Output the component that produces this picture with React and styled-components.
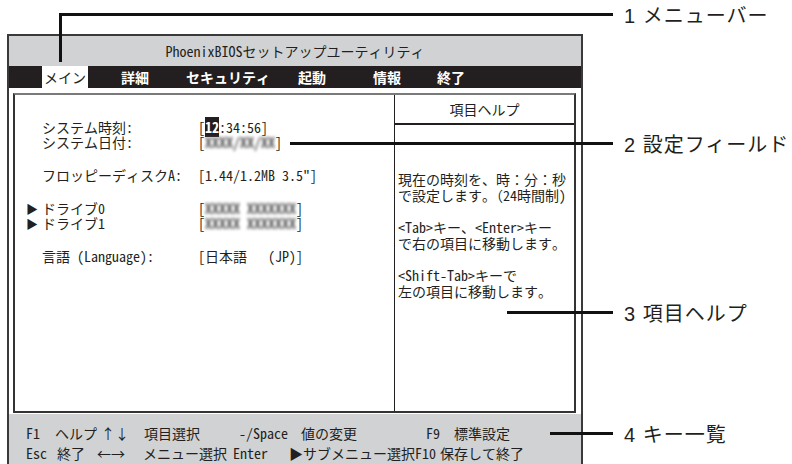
import React from 'react';
import styled, { createGlobalStyle } from 'styled-components';

const GlobalStyle = createGlobalStyle`
  html, body { margin: 0; padding: 0; background: #fff; }
  body { font-family: "Noto Sans CJK JP", sans-serif; }
`;

const BIOS_FONT = `"Noto Sans Mono CJK JP", "Noto Sans CJK JP", sans-serif`;
const INK = '#231f20';

const Page = styled.div`
  position: relative;
  width: 792px;
  height: 464px;
  overflow: hidden;
  background: #fff;
  padding: 34px 0 0 7px;
  box-sizing: border-box;
`;

const Window = styled.div`
  width: 576px;
  height: 470px;
  box-sizing: border-box;
  border: 2px solid #3a3a3a;
  display: flex;
  flex-direction: column;
  font-family: ${BIOS_FONT};
  color: ${INK};
  font-size: 14px;
`;

const TitleBar = styled.div`
  height: 30px;
  flex-shrink: 0;
  background: #d1d2d4;
  display: flex;
  align-items: center;
  justify-content: center;
`;

const MenuBar = styled.div`
  height: 22px;
  flex-shrink: 0;
  background: ${INK};
  display: flex;
  align-items: stretch;
  padding-left: 33px;
  font-size: 14px;
`;

const MenuItem = styled.div`
  display: flex;
  align-items: center;
  padding: 0 2px;
  margin-left: ${p => p.$ml || 0}px;
  background: ${p => (p.$active ? '#fff' : 'transparent')};
  color: ${p => (p.$active ? INK : '#fff')};
  font-weight: ${p => (p.$active ? 400 : 700)};
`;

const Body = styled.div`
  height: 326px;
  flex-shrink: 0;
  box-sizing: border-box;
  padding: 5px 5px 1px 4px;
  background: #fff;
`;

const Frame = styled.div`
  height: 100%;
  box-sizing: border-box;
  border: 2px solid #333;
  border-top-color: #7a7a7a;
  display: grid;
  grid-template-columns: 380px 1fr;
`;

const SettingsPane = styled.div`
  box-sizing: border-box;
  border-right: 1px solid ${INK};
  padding: 25px 0 0 11px;
`;

const Group = styled.div`
  & + & { margin-top: 18px; }
`;

const Row = styled.div`
  display: grid;
  grid-template-columns: 16px 156px auto;
  height: 15px;
  line-height: 15px;
  white-space: nowrap;
`;

const Marker = styled.span`
  font-size: 12px;
`;

const Hi = styled.span`
  background: ${INK};
  color: #fff;
  font-weight: 700;
`;

const Masked = styled.span`
  color: #5e5e5e;
  font-weight: 700;
  filter: blur(1.4px);
`;

const HelpPane = styled.div`
  display: flex;
  flex-direction: column;
`;

const HelpHeader = styled.div`
  height: 30px;
  flex-shrink: 0;
  box-sizing: border-box;
  border-bottom: 2px solid ${INK};
  display: flex;
  align-items: center;
  justify-content: center;
`;

const HelpBody = styled.div`
  padding: 46px 0 0 3px;
`;

const HelpPara = styled.p`
  margin: 0;
  line-height: 16px;
  white-space: nowrap;
  & + & { margin-top: 16px; }
`;

const KeyBar = styled.div`
  flex: 1;
  background: #d1d2d4;
  padding: 9px 0 0 17px;
`;

const KeyLine = styled.div`
  display: flex;
  height: ${p => p.$h}px;
  line-height: ${p => p.$h}px;
  white-space: nowrap;
`;

const KeyCell = styled.span`
  width: ${p => (p.$w ? `${p.$w}px` : 'auto')};
  margin-right: ${p => p.$gap || 0}px;
  flex-shrink: 0;
`;

const Callout = styled.div`
  position: absolute;
  left: ${p => p.$x}px;
  top: ${p => p.$y}px;
  height: 0;
  display: flex;
  align-items: center;
`;

const Leader = styled.div`
  width: ${p => p.$w}px;
  height: 3px;
  background: #111;
`;

const Elbow = styled.div`
  position: absolute;
  left: 59px;
  top: 13px;
  width: 3px;
  height: 49px;
  background: #111;
`;

const CalloutLabel = styled.span`
  margin-left: 11px;
  font-family: "Liberation Sans", "Noto Sans CJK JP", sans-serif;
  font-size: 20px;
  letter-spacing: 1px;
  color: ${INK};
  white-space: nowrap;
`;

const menu = [
  { label: 'メイン', ml: 0, active: true },
  { label: '詳細', ml: 31 },
  { label: 'セキュリティ', ml: 33 },
  { label: '起動', ml: 24 },
  { label: '情報', ml: 43 },
  { label: '終了', ml: 32 },
];

const keys1 = [
  ['F1', 29], ['ヘルプ', 46], ['↑↓', 43], ['項目選択', 95],
  ['-/Space', 62], ['値の変更', 125], ['F9', 28], ['標準設定', 0],
];
const keys2 = [
  ['Esc', 31], ['終了', 40], ['←→', 46], ['メニュー選択', 90],
  ['Enter', 56], ['▶サブメニュー選択', 0], ['F10', 0, 4], ['保存して終了', 0],
];

const callouts = [
  { x: 59, y: 14.5, w: 554, label: '1 メニューバー' },
  { x: 290, y: 143.5, w: 323, label: '2 設定フィールド' },
  { x: 507, y: 312.5, w: 106, label: '3 項目ヘルプ' },
  { x: 550, y: 433.5, w: 63, label: '4 キー一覧' },
];

export default function App() {
  return (
    <>
      <GlobalStyle />
      <Page>
        <Window>
          <TitleBar>PhoenixBIOSセットアップユーティリティ</TitleBar>
          <MenuBar>
            {menu.map(m => (
              <MenuItem key={m.label} $ml={m.ml} $active={m.active}>{m.label}</MenuItem>
            ))}
          </MenuBar>
          <Body>
            <Frame>
              <SettingsPane>
                <Group>
                  <Row><span /><span>システム時刻:</span><span>[<Hi>12</Hi>:34:56]</span></Row>
                  <Row><span /><span>システム日付:</span><span>[<Masked>XXXX/XX/XX</Masked>]</span></Row>
                </Group>
                <Group>
                  <Row><span /><span>フロッピーディスクA:</span><span>[1.44/1.2MB 3.5"]</span></Row>
                </Group>
                <Group>
                  <Row><Marker>▶</Marker><span>ドライブ0</span><span>[<Masked>XXXXX XXXXXXX</Masked>]</span></Row>
                  <Row><Marker>▶</Marker><span>ドライブ1</span><span>[<Masked>XXXXX XXXXXXX</Masked>]</span></Row>
                </Group>
                <Group>
                  <Row><span /><span>言語 (Language):</span><span>[日本語　 (JP)]</span></Row>
                </Group>
              </SettingsPane>
              <HelpPane>
                <HelpHeader>項目ヘルプ</HelpHeader>
                <HelpBody>
                  <HelpPara>現在の時刻を、時：分：秒<br />で設定します。（24時間制)</HelpPara>
                  <HelpPara>&lt;Tab&gt;キー、&lt;Enter&gt;キー<br />で右の項目に移動します。</HelpPara>
                  <HelpPara>&lt;Shift-Tab&gt;キーで<br />左の項目に移動します。</HelpPara>
                </HelpBody>
              </HelpPane>
            </Frame>
          </Body>
          <KeyBar>
            <KeyLine $h={20}>{keys1.map(([t, w, g]) => <KeyCell key={t} $w={w} $gap={g}>{t}</KeyCell>)}</KeyLine>
            <KeyLine $h={21}>{keys2.map(([t, w, g]) => <KeyCell key={t} $w={w} $gap={g}>{t}</KeyCell>)}</KeyLine>
          </KeyBar>
        </Window>
        <Elbow />
        {callouts.map(c => (
          <Callout key={c.label} $x={c.x} $y={c.y}>
            <Leader $w={c.w} />
            <CalloutLabel>{c.label}</CalloutLabel>
          </Callout>
        ))}
      </Page>
    </>
  );
}
